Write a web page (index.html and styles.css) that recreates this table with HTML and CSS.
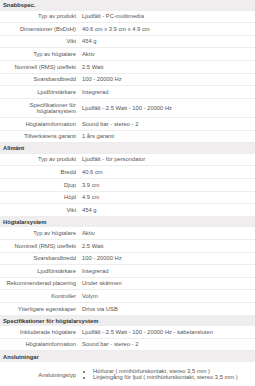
FILE: index.html
```html
<!DOCTYPE html>
<html lang="sv">
<head>
<meta charset="utf-8">
<link rel="stylesheet" href="styles.css">
</head>
<body>
<div class="specs">
  <div class="hd">Snabbspec.</div>
  <div class="row"><div class="lb">Typ av produkt</div><div class="vl">Ljudfält - PC-multimedia</div></div>
  <div class="row"><div class="lb">Dimensioner (BxDxH)</div><div class="vl">40.6 cm x 3.9 cm x 4.9 cm</div></div>
  <div class="row"><div class="lb">Vikt</div><div class="vl">454 g</div></div>
  <div class="row"><div class="lb">Typ av högtalare</div><div class="vl">Aktiv</div></div>
  <div class="row"><div class="lb">Nominell (RMS) uteffekt</div><div class="vl">2.5 Watt</div></div>
  <div class="row"><div class="lb">Svarsbandbredd</div><div class="vl">100 - 20000 Hz</div></div>
  <div class="row"><div class="lb">Ljudförstärkare</div><div class="vl">Integrerad</div></div>
  <div class="row"><div class="lb">Specifikationer för<br>högtalarsystem</div><div class="vl">Ljudfält - 2.5 Watt - 100 - 20000 Hz</div></div>
  <div class="row"><div class="lb">Högtalarinformation</div><div class="vl">Sound bar - stereo - 2</div></div>
  <div class="row"><div class="lb">Tillverkarens garanti</div><div class="vl">1 års garanti</div></div>

  <div class="hd">Allmänt</div>
  <div class="row"><div class="lb">Typ av produkt</div><div class="vl">Ljudfält - för persondator</div></div>
  <div class="row"><div class="lb">Bredd</div><div class="vl">40.6 cm</div></div>
  <div class="row"><div class="lb">Djup</div><div class="vl">3.9 cm</div></div>
  <div class="row"><div class="lb">Höjd</div><div class="vl">4.9 cm</div></div>
  <div class="row"><div class="lb">Vikt</div><div class="vl">454 g</div></div>

  <div class="hd">Högtalarsystem</div>
  <div class="row"><div class="lb">Typ av högtalare</div><div class="vl">Aktiv</div></div>
  <div class="row"><div class="lb">Nominell (RMS) uteffekt</div><div class="vl">2.5 Watt</div></div>
  <div class="row"><div class="lb">Svarsbandbredd</div><div class="vl">100 - 20000 Hz</div></div>
  <div class="row"><div class="lb">Ljudförstärkare</div><div class="vl">Integrerad</div></div>
  <div class="row"><div class="lb">Rekommenderad placering</div><div class="vl">Under skärmen</div></div>
  <div class="row"><div class="lb">Kontroller</div><div class="vl">Volym</div></div>
  <div class="row"><div class="lb">Ytterligare egenskaper</div><div class="vl">Drivs via USB</div></div>

  <div class="hd">Specifikationer för högtalarsystem</div>
  <div class="row"><div class="lb">Inkluderade högtalare</div><div class="vl">Ljudfält - 2.5 Watt - 100 - 20000 Hz - kabelansluten</div></div>
  <div class="row"><div class="lb">Högtalarinformation</div><div class="vl">Sound bar - stereo - 2</div></div>

  <div class="hd">Anslutningar</div>
  <div class="row tall"><div class="lb">Anslutningstyp</div><div class="vl">
    <ul class="list">
      <li>Hörlurar ( minihörlurskontakt, stereo 3,5 mm )</li>
      <li>Linjeingång för ljud ( minihörlurskontakt, stereo 3,5 mm )</li>
    </ul>
  </div></div>
</div>
</body>
</html>
```
FILE: styles.css
```css
html, body {
  margin: 0;
  padding: 0;
  background: #fff;
}
body {
  font-family: "Liberation Sans", Arial, sans-serif;
  font-size: 5.8px;
  line-height: 6.35px;
  color: #555;
  overflow: hidden;
}
.specs {
  width: 255px;
}
.hd {
  background: #efeded;
  color: #333;
  font-weight: bold;
  padding: 2.1px 3px 2.1px 3px;
}
.row {
  display: grid;
  grid-template-columns: 79px 1fr;
  align-items: center;
  border-bottom: 1px solid #ededed;
  padding: 2.65px 0 2.65px 0;
}
.row:last-child {
  border-bottom: none;
}
.lb {
  text-align: right;
  padding-right: 3px;
  color: #555;
}
.vl {
  padding-left: 3px;
  color: #555;
}
.list {
  margin: 3px 0 6px 0;
  padding: 0 0 0 11px;
  list-style: disc;
}
.list li {
  padding-left: 0;
}
```
